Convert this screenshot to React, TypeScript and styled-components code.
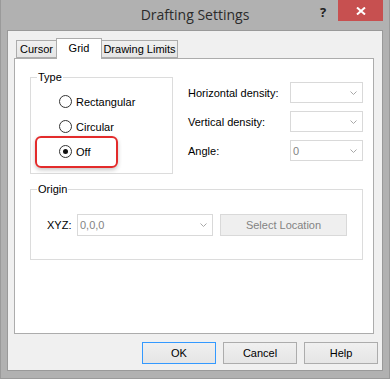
import React from 'react'
import styled, { createGlobalStyle } from 'styled-components'

const GlobalStyle = createGlobalStyle`
  html, body {
    margin: 0;
    padding: 0;
    background: #b1b1b1;
    overflow: hidden;
  }
  body {
    font-family: 'Liberation Sans', Arial, sans-serif;
    font-size: 11px;
    color: #000;
  }
`

const Frame = styled.div`
  width: 390px;
  height: 379px;
  box-sizing: border-box;
  background: #b1b1b1;
  border: 1px solid #9a9a9a;
  border-top: none;
  padding: 0 6px 7px;
  display: flex;
  flex-direction: column;
`

const TitleBar = styled.div`
  height: 30px;
  flex: none;
  display: grid;
  grid-template-columns: 1fr auto 1fr;
  align-items: start;
`

const Title = styled.div`
  grid-column: 2;
  font-family: 'Open Sans', 'Noto Sans', sans-serif;
  font-size: 14px;
  line-height: 30px;
  color: #2b2b2b;
`

const Controls = styled.div`
  grid-column: 3;
  justify-self: end;
  display: flex;
`

const HelpGlyph = styled.div`
  width: 30px;
  height: 21px;
  display: flex;
  align-items: center;
  justify-content: center;
  font-family: 'Open Sans', 'Noto Sans', sans-serif;
  font-weight: 700;
  font-size: 13px;
  color: #222;
  padding-top: 3px;
  box-sizing: border-box;
`

const CloseButton = styled.div`
  width: 45px;
  height: 21px;
  background: #c75050;
  display: flex;
  align-items: center;
  justify-content: center;
`

const Client = styled.div`
  flex: 1;
  border: 1px solid #999;
  background: #f0f0f0;
  padding: 7px 6px 0 6px;
  display: flex;
  flex-direction: column;
`

const TabStrip = styled.div`
  display: flex;
  align-items: flex-end;
  height: 20px;
  padding-left: 2px;
  position: relative;
  z-index: 1;
`

const Tab = styled.div<{ $active?: boolean; $w: number }>`
  width: ${(p) => p.$w}px;
  height: ${(p) => (p.$active ? 21 : 18)}px;
  margin-left: -1px;
  margin-bottom: ${(p) => (p.$active ? -1 : 0)}px;
  box-sizing: border-box;
  border: 1px solid #acacac;
  border-bottom: ${(p) => (p.$active ? 'none' : '1px solid #acacac')};
  background: ${(p) =>
    p.$active ? '#fff' : 'linear-gradient(#f0f0f0, #e5e5e5)'};
  display: flex;
  justify-content: center;
  align-items: ${(p) => (p.$active ? 'flex-start' : 'center')};
  padding-top: ${(p) => (p.$active ? 3 : 0)}px;
  position: relative;
  z-index: ${(p) => (p.$active ? 2 : 1)};

  &:first-child {
    margin-left: 0;
  }
`

const Panel = styled.div`
  width: 360px;
  height: 276px;
  box-sizing: border-box;
  border: 1px solid #acacac;
  background: #fff;
  padding: 12px 0 0 15px;
`

const TopRow = styled.div`
  display: flex;
  gap: 15px;
`

const Group = styled.fieldset<{ $w: number }>`
  width: ${(p) => p.$w}px;
  box-sizing: border-box;
  margin: 0;
  padding: 0;
  border: 1px solid #dcdcdc;
  min-inline-size: 0;
`

const OriginGroup = styled(Group)`
  margin-top: 9px;
`

const Legend = styled.legend`
  margin-left: 6px;
  padding: 0 1px;
  line-height: 13px;
`

const RadioList = styled.div`
  padding: 5px 0 9px 28px;
`

const RadioRow = styled.label`
  height: 25px;
  display: flex;
  align-items: center;
  gap: 4px;
  position: relative;
`

const RadioCircle = styled.span<{ $checked?: boolean }>`
  width: 13px;
  height: 13px;
  box-sizing: border-box;
  border-radius: 50%;
  border: 1px solid #333;
  background: #fff;
  display: flex;
  align-items: center;
  justify-content: center;

  &::after {
    content: '';
    display: ${(p) => (p.$checked ? 'block' : 'none')};
    width: 5px;
    height: 5px;
    border-radius: 50%;
    background: #111;
  }
`

const Highlight = styled.span`
  position: absolute;
  left: -24px;
  top: -3px;
  width: 83px;
  height: 32px;
  box-sizing: border-box;
  border: 2px solid #e32b2b;
  border-radius: 6px;
  box-shadow: 0 2px 4px rgba(0, 0, 0, 0.22);
  pointer-events: none;
`

const DensityGrid = styled.div`
  margin-top: 11px;
  display: grid;
  grid-template-columns: 102px 73px;
  grid-auto-rows: 21px;
  row-gap: 8px;
  align-items: center;
`

const Combo = styled.div<{ $w: number; $h: number }>`
  width: ${(p) => p.$w}px;
  height: ${(p) => p.$h}px;
  box-sizing: border-box;
  border: 1px solid #d9d9d9;
  background: #fff;
  color: #838383;
  display: flex;
  align-items: center;
  justify-content: space-between;
  padding: 0 5px 0 2px;
`

const OriginRow = styled.div`
  display: flex;
  align-items: center;
  padding: 18px 0 23px 16px;
`

const XyzLabel = styled.span`
  width: 30px;
`

const DisabledButton = styled.div`
  margin-left: 7px;
  width: 127px;
  height: 22px;
  box-sizing: border-box;
  border: 1px solid #d9d9d9;
  background: #efefef;
  color: #838383;
  display: flex;
  align-items: center;
  justify-content: center;
`

const ButtonRow = styled.div`
  margin-top: 8px;
  display: flex;
  justify-content: flex-end;
  gap: 7px;
  margin-right: -2px;
`

const DialogButton = styled.div<{ $default?: boolean }>`
  width: 74px;
  height: 22px;
  box-sizing: border-box;
  border: 1px solid ${(p) => (p.$default ? '#3399ff' : '#acacac')};
  background: linear-gradient(#f0f0f0, #e5e5e5);
  display: flex;
  align-items: center;
  justify-content: center;
`

const Chevron = () => (
  <svg width="7" height="4" viewBox="0 0 7 4">
    <polyline points="0.5,0.5 3.5,3.5 6.5,0.5" fill="none" stroke="#a8a8a8" strokeWidth="1" />
  </svg>
)

const Radio = ({ label, checked, highlight }: { label: string; checked?: boolean; highlight?: boolean }) => (
  <RadioRow>
    <RadioCircle $checked={checked} />
    {label}
    {highlight && <Highlight />}
  </RadioRow>
)

export default function App() {
  return (
    <>
      <GlobalStyle />
      <Frame>
        <TitleBar>
          <Title>Drafting Settings</Title>
          <Controls>
            <HelpGlyph>?</HelpGlyph>
            <CloseButton>
              <svg width="10" height="8" viewBox="0 0 10 8">
                <path d="M1 0.5 L9 7.5 M9 0.5 L1 7.5" stroke="#fff" strokeWidth="2" fill="none" />
              </svg>
            </CloseButton>
          </Controls>
        </TitleBar>
        <Client>
          <TabStrip>
            <Tab $w={41}>Cursor</Tab>
            <Tab $w={46} $active>
              Grid
            </Tab>
            <Tab $w={77}>Drawing Limits</Tab>
          </TabStrip>
          <Panel>
            <TopRow>
              <Group $w={143}>
                <Legend>Type</Legend>
                <RadioList>
                  <Radio label="Rectangular" />
                  <Radio label="Circular" />
                  <Radio label="Off" checked highlight />
                </RadioList>
              </Group>
              <DensityGrid>
                <span>Horizontal density:</span>
                <Combo $w={73} $h={21}>
                  <span />
                  <Chevron />
                </Combo>
                <span>Vertical density:</span>
                <Combo $w={73} $h={21}>
                  <span />
                  <Chevron />
                </Combo>
                <span>Angle:</span>
                <Combo $w={73} $h={21}>
                  <span>0</span>
                  <Chevron />
                </Combo>
              </DensityGrid>
            </TopRow>
            <OriginGroup $w={333}>
              <Legend>Origin</Legend>
              <OriginRow>
                <XyzLabel>XYZ:</XyzLabel>
                <Combo $w={136} $h={22}>
                  <span>0,0,0</span>
                  <Chevron />
                </Combo>
                <DisabledButton>Select Location</DisabledButton>
              </OriginRow>
            </OriginGroup>
          </Panel>
          <ButtonRow>
            <DialogButton $default>OK</DialogButton>
            <DialogButton>Cancel</DialogButton>
            <DialogButton>Help</DialogButton>
          </ButtonRow>
        </Client>
      </Frame>
    </>
  )
}
